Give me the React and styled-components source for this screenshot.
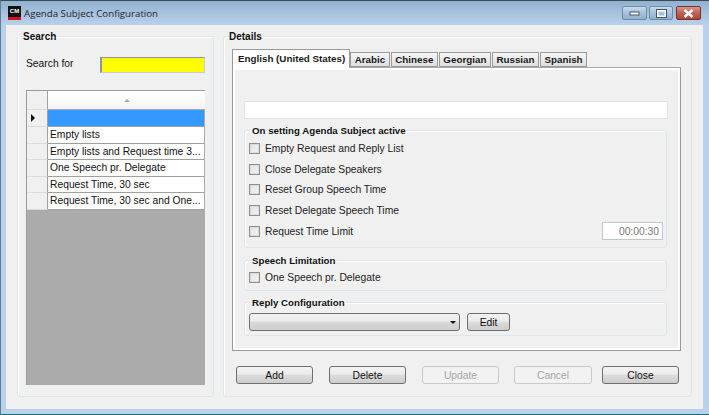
import React from "react";
import styled, { createGlobalStyle } from "styled-components";

const Global = createGlobalStyle`
  html, body { margin: 0; padding: 0; background: #b9d1ea; }
  body { font-family: "Liberation Sans", Arial, sans-serif; font-size: 10.3px; color: #1a1a1a; }
  * { box-sizing: border-box; }
`;

const Win = styled.div`
  width: 709px; height: 415px; display: flex; flex-direction: column; overflow: hidden;
  background: #b9d1ea;
  border-top: 1px solid #3b4a52;
  border-bottom: 1px solid #1d6a78;
  border-left: 1px solid #5f7f92;
`;
const TitleBar = styled.div`
  height: 24px; flex: none; display: flex; align-items: center; padding: 0 8px 0 7px;
  background: linear-gradient(180deg, #8fb0cf 0%, #a4c0dc 45%, #b9d1ea 100%);
`;
const Logo = styled.div`
  width: 13px; height: 14px; margin-right: 3px; background: linear-gradient(180deg, #111 0 76%, #d3121c 76%);
  color: #fff; font: bold 6px/10px "Liberation Sans", sans-serif; text-align: center; overflow: hidden;
`;
const Title = styled.span`
  flex: 1; font: 9.7px "Open Sans", sans-serif; color: #1c2530;
`;
const Ctl = styled.div`
  width: ${p => p.$w}px; height: 14px; margin-left: ${p => p.$ml}px; display: flex; align-items: center; justify-content: center;
  border: 1px solid ${p => p.$close ? "#7b2f28" : "#6d8aa6"}; border-radius: 2px;
  background: ${p => p.$close ? "linear-gradient(180deg,#d8998b,#c0675a 45%,#ad4436)" : "linear-gradient(180deg,#c9dbed,#a7c1dc 50%,#92b0cf)"};
  color: #fff;
`;
const Client = styled.div`
  flex: 1; margin: 0 6px 5px 5px; background: #f0f0f0; display: flex; flex-direction: column; min-height: 0;
  padding: 5px 11px 12px 11px;
`;
const Columns = styled.div`
  flex: 1; display: flex; gap: 9px; min-height: 0;
`;
const Group = styled.fieldset`
  margin: ${p => p.$mt ?? 0}px 0 0; min-width: 0; border: 1px solid #dde6ee; border-radius: 3px;
  box-shadow: inset 1px 1px 0 #fff; display: flex; flex-direction: column;
  ${p => p.$grow ? "flex: 1;" : ""}
  width: ${p => p.$w ? p.$w + "px" : "auto"};
  height: ${p => p.$h ? p.$h + "px" : "auto"};
  padding: ${p => p.$pad || "0"};
`;
const Legend = styled.legend`
  margin-left: ${p => p.$ml ?? 6}px; padding: 0 1px; font-weight: bold; font-size: ${p => p.$fs ?? 9.7}px; line-height: 13px; color: #111;
`;
const SearchRow = styled.div`
  display: flex; align-items: center; height: 16px; margin-bottom: 17px;
`;
const SearchLabel = styled.label`
  width: 74px; color: #111; padding-bottom: 3px;
`;
const YellowInput = styled.div`
  width: 105px; height: 16px; background: #ff0; border: 1px solid #c2ced9; border-left: 2px solid #8a97a3; border-top-color: #8a97a3;
`;
const Grid = styled.div`
  flex: 1; width: 179px; background: #ababab; border-top: 1px solid #9a9a9a; border-left: 1px solid #9a9a9a; display: flex; flex-direction: column;
`;
const GridRow = styled.div`
  display: flex; height: ${p => p.$h}px; flex: none;
`;
const RowHead = styled.div`
  width: 21px; flex: none; background: #f0f0f0; display: flex; align-items: center; justify-content: center;
  border-right: 1px solid #a0a0a0; border-bottom: 1px solid #dcdcdc;
  padding-right: 8px;
`;
const ColHead = styled.div`
  flex: 1; background: linear-gradient(180deg, #fff, #f9f9f9 70%, #f0f0f0); display: flex; align-items: center; justify-content: center;
  border-bottom: 1px solid #a8a8a8;
`;
const Cell = styled.div`
  flex: 1; min-width: 0; padding-left: 2px; line-height: 15px; white-space: nowrap; overflow: hidden;
  color: #111; border-bottom: 1px solid #a0a0a0; margin-right: 1px;
  background: ${p => p.$sel ? "#3399ff" : "#fff"};
`;
const TabStrip = styled.div`
  display: flex; align-items: flex-end; height: 18px; position: relative; z-index: 1;
`;
const Tab = styled.div`
  height: ${p => p.$on ? 19 : 15}px; padding: ${p => p.$on ? "0 4px 1px 5px" : "0 3.5px"}; margin-right: ${p => p.$on ? 0 : 1}px;
  display: flex; align-items: center; font-weight: bold; font-size: 9.8px; color: #1a1a1a;
  background: ${p => p.$on ? "#fff" : "linear-gradient(180deg,#f6f6f6,#dedede)"};
  border: 1px solid #9a9a9a;
  ${p => p.$on ? "margin-bottom: -1px; border-bottom: none;" : ""}
`;
const TabPanel = styled.div`
  width: 449px; height: 284px; background: #f0f0f0; border: 1px solid #9a9a9a; border-top-color: #a8a8a8;
  box-shadow: inset 2px 2px 0 #fff, inset -2px -2px 0 #fff;
  padding: 33px 13px 0 11px; display: flex; flex-direction: column; align-items: flex-start;
`;
const NameInput = styled.div`
  width: 424px; height: 18px; flex: none; background: #fff; border: 1px solid #dde3e8;
`;
const Check = styled.label`
  display: flex; align-items: center; height: 20.7px; color: #222;
`;
const Box = styled.span`
  width: 11px; height: 11px; margin-right: 5px; flex: none; border: 1px solid #8e8f8f;
  background: linear-gradient(135deg,#e2e2e2,#f4f4f4); box-shadow: inset 0 0 0 1px #dcdcdc;
`;
const TimeRow = styled.div`
  display: flex; align-items: center; justify-content: space-between; height: 20.7px;
`;
const TimeBox = styled.div`
  width: 61px; height: 18px; background: #fff; border: 1px solid #bfc6cc; color: #777; text-align: right;
  padding-right: 3px; line-height: 17px;
`;
const ReplyRow = styled.div`
  display: flex; align-items: center; gap: 7px; padding-top: 4px;
`;
const Select = styled.div`
  width: 211px; height: 18px; border: 1px solid #707070; border-radius: 3px; display: flex; align-items: center; justify-content: flex-end;
  padding-right: 3px; background: linear-gradient(180deg,#f2f2f2,#ebebeb 45%,#d8d8d8 50%,#cfcfcf);
`;
const Btn = styled.button`
  width: ${p => p.$w}px; height: 18px; margin: 0 0 0 ${p => p.$ml ?? 0}px; padding: 0; font: 10.3px "Liberation Sans", sans-serif;
  color: ${p => p.disabled ? "#a5a5a5" : "#111"};
  border: 1px solid ${p => p.disabled ? "#c9c9c9" : "#6f6f6f"}; border-radius: 3px;
  background: ${p => p.disabled ? "#f2f2f2" : "linear-gradient(180deg,#f3f3f3,#ebebeb 45%,#dcdcdc 50%,#cdcdcd)"};
`;
const ButtonBar = styled.div`
  display: flex; margin-top: 15px; margin-left: 4px;
`;
const Arrow = styled.span`
  width: 0; height: 0; border-left: ${p => p.$s}px solid transparent; border-right: ${p => p.$s}px solid transparent;
  ${p => p.$up ? `border-bottom: ${p.$s}px solid #a8a8a8;` : `border-top: ${p.$s}px solid #111;`}
`;
const Marker = styled.span`
  width: 0; height: 0; border-top: 4px solid transparent; border-bottom: 4px solid transparent; border-left: 4px solid #111;
`;

const rows = ["Empty lists", "Empty lists and Request time 3...", "One Speech pr. Delegate", "Request Time, 30 sec", "Request Time, 30 sec and One..."];
const tabs = ["Arabic", "Chinese", "Georgian", "Russian", "Spanish"];
const checks = ["Empty Request and Reply List", "Close Delegate Speakers", "Reset Group Speech Time", "Reset Delegate Speech Time"];

export default function App() {
  return (
    <Win>
      <Global />
      <TitleBar>
        <Logo>CM</Logo>
        <Title>Agenda Subject Configuration</Title>
        <Ctl $w={25} $ml={0}>
          <svg width="11" height="6" viewBox="0 0 11 6"><rect x="1" y="2" width="9" height="3" fill="#fff" stroke="#44566a" /></svg>
        </Ctl>
        <Ctl $w={24} $ml={2}>
          <svg width="11" height="9" viewBox="0 0 11 9"><rect x="1.5" y="1.5" width="8" height="6" fill="none" stroke="#fff" strokeWidth="2" /><rect x="0.5" y="0.5" width="10" height="8" fill="none" stroke="#44566a" /></svg>
        </Ctl>
        <Ctl $w={25} $ml={3} $close>
          <svg width="11" height="9" viewBox="0 0 11 9"><path d="M1.5 1 L9.5 8 M9.5 1 L1.5 8" stroke="#fff" strokeWidth="2.4" /></svg>
        </Ctl>
      </TitleBar>
      <Client>
        <Columns>
          <Group $w={197} $pad="14px 8px 11px 8px">
            <Legend $ml={-4} $fs={10}>Search</Legend>
            <SearchRow>
              <SearchLabel>Search for</SearchLabel>
              <YellowInput />
            </SearchRow>
            <Grid>
              <GridRow $h={19}><RowHead /><ColHead><Arrow $up $s={3} /></ColHead></GridRow>
              <GridRow $h={17}><RowHead><Marker /></RowHead><Cell $sel /></GridRow>
              {rows.map(r => (
                <GridRow $h={16.6} key={r}><RowHead /><Cell>{r}</Cell></GridRow>
              ))}
            </Grid>
          </Group>
          <Group $grow $pad="6px 0 0 8px">
            <Legend $ml={-4} $fs={10}>Details</Legend>
            <TabStrip>
              <Tab $on>English (United States)</Tab>
              {tabs.map(t => <Tab key={t}>{t}</Tab>)}
            </TabStrip>
            <TabPanel>
              <NameInput />
              <Group $w={423} $h={124} $mt={5} $pad="1px 3px 0 4px">
                <Legend $ml={2}>On setting Agenda Subject active</Legend>
                {checks.map(c => <Check key={c}><Box />{c}</Check>)}
                <TimeRow>
                  <Check><Box />Request Time Limit</Check>
                  <TimeBox>00:00:30</TimeBox>
                </TimeRow>
              </Group>
              <Group $w={423} $h={37} $mt={6} $pad="0 3px 0 4px">
                <Legend $ml={2}>Speech Limitation</Legend>
                <Check><Box />One Speech pr. Delegate</Check>
              </Group>
              <Group $w={423} $h={40} $mt={5} $pad="0 3px 0 4px">
                <Legend $ml={2}>Reply Configuration</Legend>
                <ReplyRow>
                  <Select><Arrow $s={3} /></Select>
                  <Btn $w={43}>Edit</Btn>
                </ReplyRow>
              </Group>
            </TabPanel>
            <ButtonBar>
              <Btn $w={77}>Add</Btn>
              <Btn $w={77} $ml={16}>Delete</Btn>
              <Btn $w={77} $ml={16} disabled>Update</Btn>
              <Btn $w={78} $ml={15} disabled>Cancel</Btn>
              <Btn $w={77} $ml={10}>Close</Btn>
            </ButtonBar>
          </Group>
        </Columns>
      </Client>
    </Win>
  );
}
